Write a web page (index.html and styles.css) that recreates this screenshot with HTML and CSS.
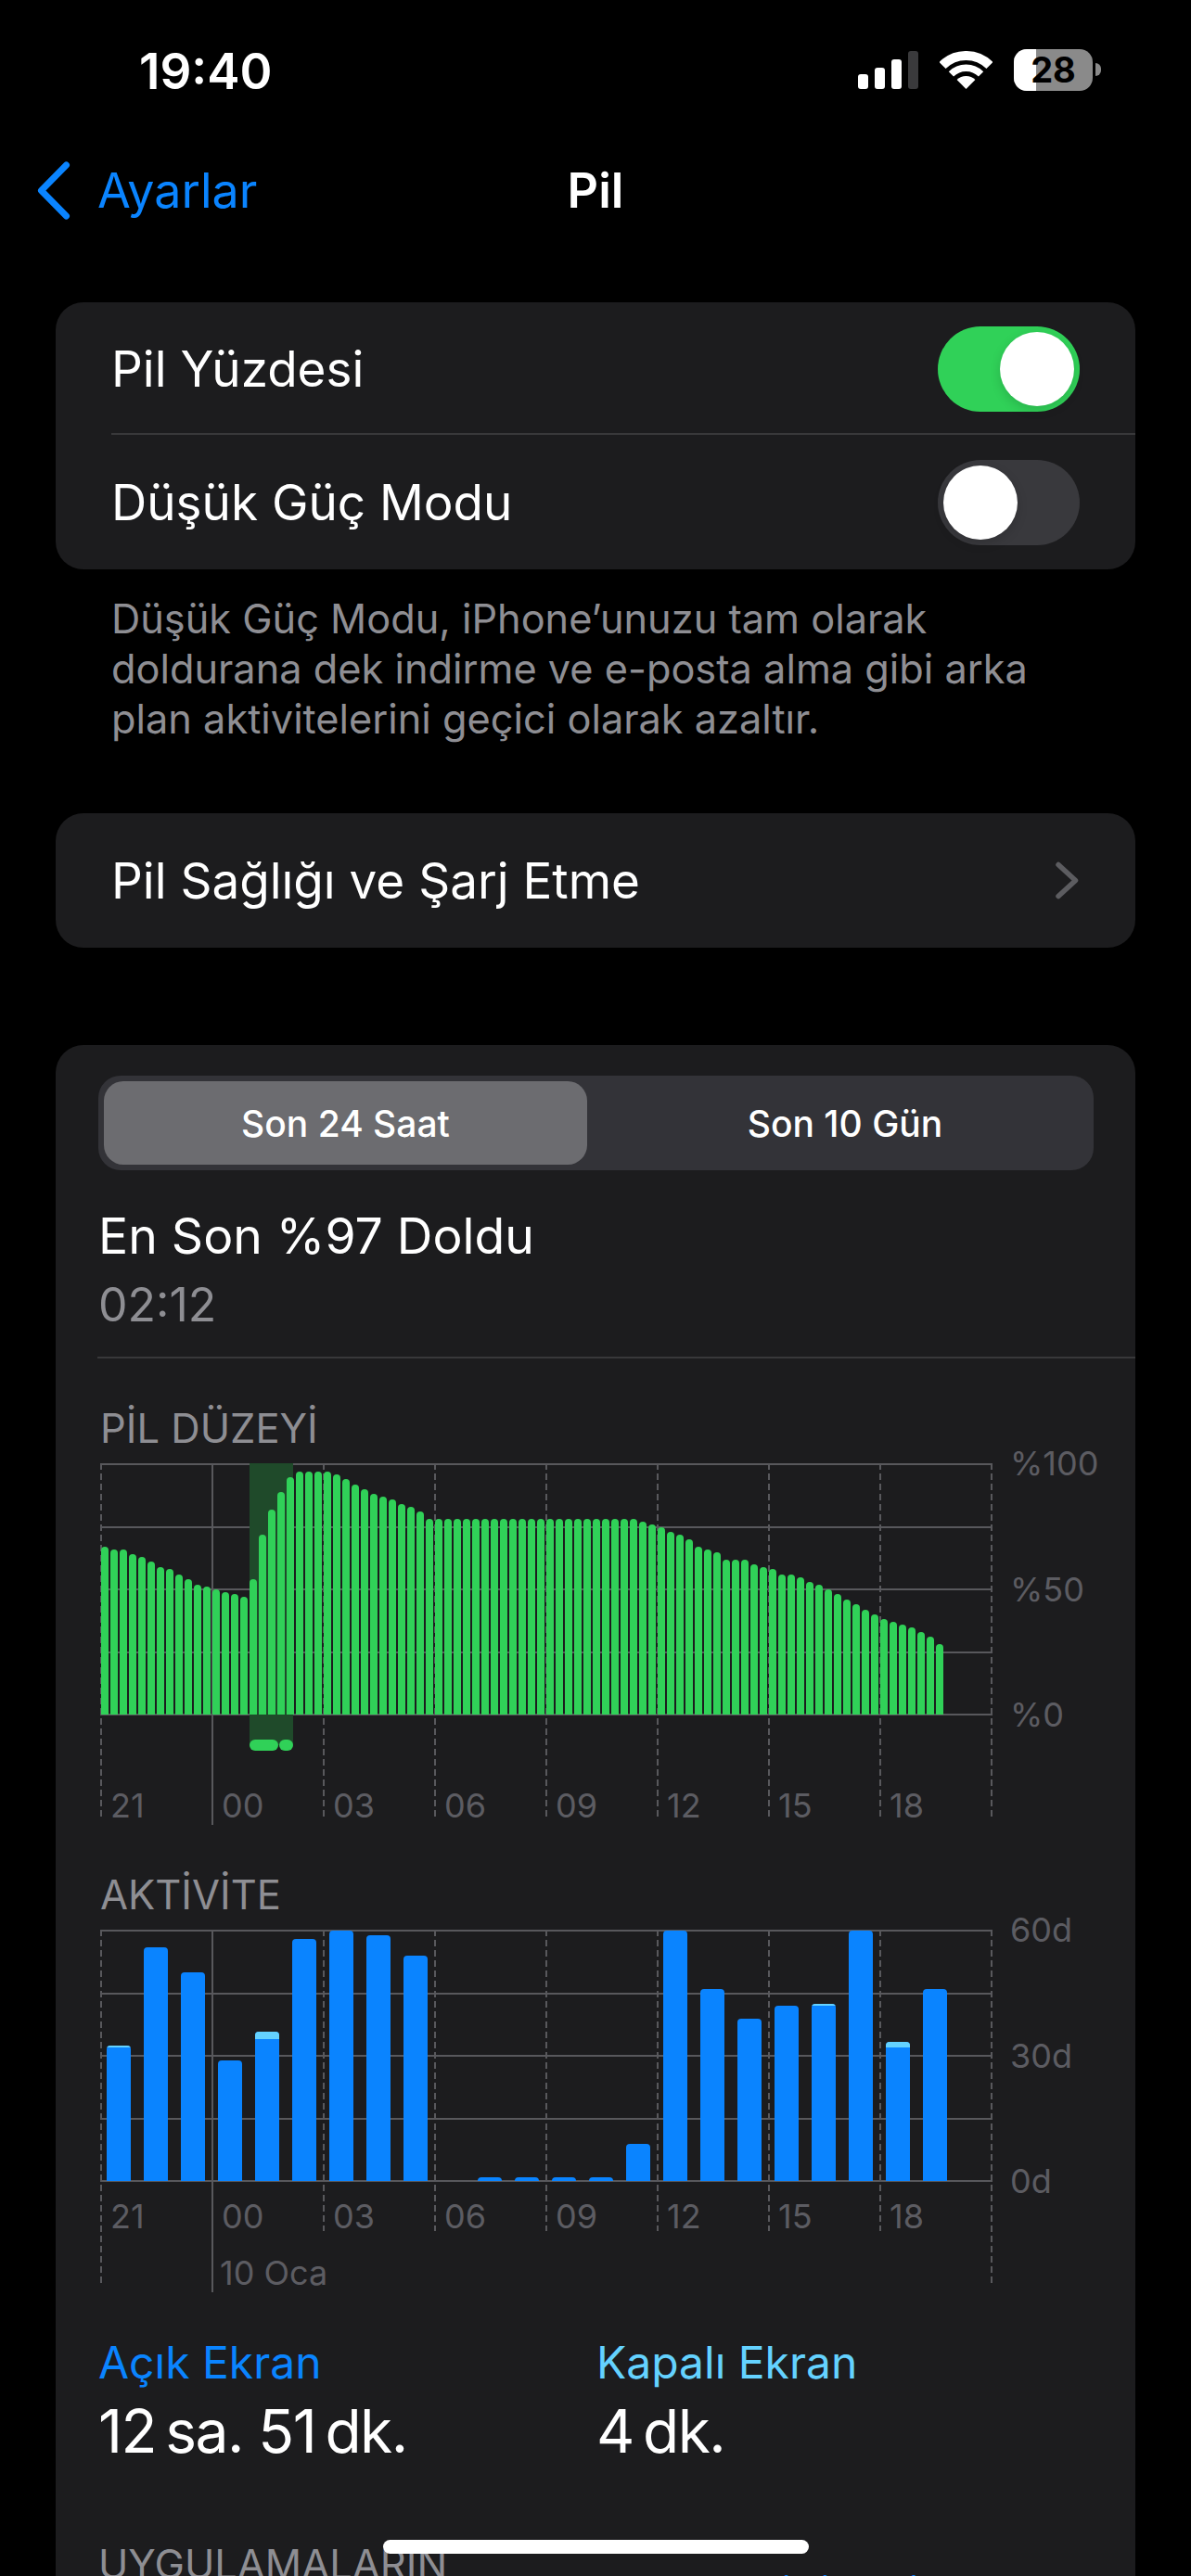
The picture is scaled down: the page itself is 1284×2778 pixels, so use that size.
FILE: index.html
```html
<!DOCTYPE html>
<html lang="tr">
<head>
    <meta charset="utf-8">
    <title>Pil</title>
    <link rel="stylesheet" href="styles.css">
</head>
<body>
    <div class="status-bar">
        <span class="clock">19:40</span>
        <div class="status-icons">
            <div class="signal">
                <span class="signal-bar s1"></span>
                <span class="signal-bar s2"></span>
                <span class="signal-bar s3"></span>
                <span class="signal-bar s4 off"></span>
            </div>
            <svg class="wifi" width="57" height="41" viewBox="0 0 57 41">
                <path d="M3.04 15.54A36 36 0 0 1 53.96 15.54" fill="none" stroke="#fff" stroke-width="10"/>
                <path d="M12.41 24.91A22.75 22.75 0 0 1 44.59 24.91" fill="none" stroke="#fff" stroke-width="7.5"/>
                <path d="M28.5 41L18.6 31.1A14 14 0 0 1 38.4 31.1Z" fill="#fff"/>
            </svg>
            <div class="battery">
                <div class="battery-body">
                    <span class="battery-fill"></span>
                    <span class="battery-num">28</span>
                </div>
                <span class="battery-nub"></span>
            </div>
        </div>
    </div>

    <div class="nav-bar">
        <div class="nav-back">
            <svg width="36" height="63" viewBox="0 0 36 63">
                <path d="M31.5 4L4.5 31.5L31.5 59" fill="none" stroke="#0a84ff" stroke-width="7" stroke-linecap="round" stroke-linejoin="round"/>
            </svg>
            <span>Ayarlar</span>
        </div>
        <span class="nav-title">Pil</span>
    </div>

    <div class="content">
        <div class="card">
            <div class="row row-first">
                <span>Pil Yüzdesi</span>
                <div class="toggle on"><span class="knob"></span></div>
            </div>
            <div class="row row-last">
                <span>Düşük Güç Modu</span>
                <div class="toggle"><span class="knob"></span></div>
            </div>
        </div>
        <p class="footnote">Düşük Güç Modu, iPhone’unuzu tam olarak doldurana dek indirme ve e-posta alma gibi arka plan aktivitelerini geçici olarak azaltır.</p>

        <div class="card card-link">
            <div class="row">
                <span>Pil Sağlığı ve Şarj Etme</span>
                <svg width="27" height="41" viewBox="0 0 27 41">
                    <path d="M4 3.5L22.5 20.5L4 37.5" fill="none" stroke="#5c5c60" stroke-width="5.5" stroke-linecap="round" stroke-linejoin="round"/>
                </svg>
            </div>
        </div>

        <div class="card card-usage">
            <div class="segmented">
                <div class="segment selected">Son 24 Saat</div>
                <div class="segment">Son 10 Gün</div>
            </div>

            <div class="charge-title">En Son %97 Doldu</div>
            <div class="charge-time">02:12</div>
            <div class="usage-divider"></div>

            <div class="section-title">PİL DÜZEYİ</div>
            <div class="chart-row">
                <div class="chart chart-level">
                    <div class="plot">
                        <div class="hlines"><i></i><i></i><i></i><i></i><i></i></div>
                        <div class="vlines">
                            <i class="vline"></i><i class="vline solid"></i><i class="vline"></i>
                            <i class="vline"></i><i class="vline"></i><i class="vline"></i>
                            <i class="vline"></i><i class="vline"></i><i class="vline"></i>
                        </div>
                        <div class="charging">
                            <span class="charge-pill wide"></span>
                            <span class="charge-pill"></span>
                        </div>
                        <div class="bars" id="levelBars"></div>
                    </div>
                    <div class="x-labels">
                        <span>21</span><span>00</span><span>03</span><span>06</span>
                        <span>09</span><span>12</span><span>15</span><span>18</span>
                    </div>
                </div>
                <div class="y-labels">
                    <span>%100</span>
                    <span>%50</span>
                    <span>%0</span>
                </div>
            </div>

            <div class="section-title section-activity">AKTİVİTE</div>
            <div class="chart-row">
                <div class="chart chart-activity">
                    <div class="plot">
                        <div class="hlines"><i></i><i></i><i></i><i></i><i></i></div>
                        <div class="vlines">
                            <i class="vline tall"></i><i class="vline solid"></i><i class="vline"></i>
                            <i class="vline"></i><i class="vline"></i><i class="vline"></i>
                            <i class="vline"></i><i class="vline"></i><i class="vline tall"></i>
                        </div>
                        <div class="bars" id="activityBars"></div>
                    </div>
                    <div class="x-labels">
                        <span>21</span><span>00</span><span>03</span><span>06</span>
                        <span>09</span><span>12</span><span>15</span><span>18</span>
                    </div>
                    <div class="date-label">10 Oca</div>
                </div>
                <div class="y-labels">
                    <span>60d</span>
                    <span>30d</span>
                    <span>0d</span>
                </div>
            </div>

            <div class="totals">
                <div class="total">
                    <div class="total-name screen-on">Açık Ekran</div>
                    <div class="total-value">12&#8201;sa. 51&#8201;dk.</div>
                </div>
                <div class="total">
                    <div class="total-name screen-off">Kapalı Ekran</div>
                    <div class="total-value">4&#8201;dk.</div>
                </div>
            </div>

            <div class="apps-head">
                <div class="apps-title">UYGULAMALARIN<br>PİL KULLANIMI</div>
                <div class="apps-link">AKTİVİTEYİ GÖSTER</div>
            </div>
        </div>
    </div>

    <div class="home-indicator"></div>

    <script src="charts.js"></script>
</body>
</html>
```

FILE: styles.css
```css
* {
    box-sizing: border-box;
}

html, body {
    height: 2778px;
    overflow: hidden;
}

body {
    margin: 0;
    background: #000;
    color: #fff;
    font-family: Inter, "Noto Sans", sans-serif;
    font-size: 53px;
    position: relative;
}

/* status bar */
.status-bar {
    height: 154px;
    display: flex;
    justify-content: space-between;
    align-items: center;
    padding: 0 97px 0 150px;
}

.clock {
    font-weight: 600;
    font-size: 53px;
}

.status-icons {
    display: flex;
    align-items: center;
    margin-top: -4px;
}

.signal {
    display: flex;
    align-items: flex-end;
    gap: 7px;
    height: 41px;
}

.signal-bar {
    width: 11px;
    background: #fff;
    border-radius: 3px;
}

.s1 { height: 16px; }
.s2 { height: 23px; }
.s3 { height: 32px; }
.s4 { height: 41px; }

.signal-bar.off {
    background: #3a3a3c;
}

.wifi {
    margin-left: 23px;
}

.battery {
    display: flex;
    align-items: center;
    margin-left: 23px;
}

.battery-body {
    position: relative;
    width: 85px;
    height: 45px;
    border-radius: 14px;
    overflow: hidden;
    background: #8a8a8a;
    display: flex;
    align-items: center;
    justify-content: center;
}

.battery-fill {
    position: absolute;
    left: 0;
    top: 0;
    bottom: 0;
    width: 24px;
    background: #fff;
}

.battery-num {
    position: relative;
    color: #000;
    font-size: 38px;
    font-weight: 700;
}

.battery-nub {
    width: 6px;
    height: 14px;
    margin-left: 3px;
    background: #8a8a8a;
    border-radius: 0 7px 7px 0;
}

/* navigation */
.nav-bar {
    height: 103px;
    position: relative;
    display: flex;
    align-items: center;
    justify-content: center;
    margin-bottom: 69px;
    font-size: 52px;
}

.nav-back {
    position: absolute;
    left: 40px;
    top: 20px;
    display: flex;
    align-items: center;
    gap: 29px;
    color: #0a84ff;
}

.nav-title {
    font-weight: 600;
}

.content {
    height: 2452px;
    overflow: hidden;
    padding: 0 60px;
}

/* cards */
.card {
    background: #1c1c1e;
    border-radius: 30px;
}

.row {
    display: flex;
    justify-content: space-between;
    align-items: center;
    height: 145px;
    padding: 0 60px 0 60px;
}

.row-first {
    height: 143px;
    position: relative;
}

.row-first::after {
    content: "";
    position: absolute;
    left: 60px;
    right: 0;
    bottom: 0;
    height: 2px;
    background: #38383a;
}

.toggle {
    width: 153px;
    height: 92px;
    border-radius: 46px;
    background: #39393d;
    padding: 6px;
}

.toggle.on {
    background: #30d158;
    display: flex;
    justify-content: flex-end;
}

.knob {
    display: block;
    width: 80px;
    height: 80px;
    border-radius: 50%;
    background: #fff;
    box-shadow: 0 4px 12px rgba(0,0,0,0.15);
}

.footnote {
    margin: 26px 0 0;
    padding: 0 60px;
    font-size: 43.3px;
    line-height: 54px;
    color: #8e8e93;
}

.card-link {
    margin-top: 75px;
}

.card-usage {
    margin-top: 105px;
    padding: 33px 0 40px 46px;
}

/* segmented control */
.segmented {
    display: flex;
    width: 1073px;
    height: 102px;
    padding: 6px;
    border-radius: 24px;
    background: #333338;
    font-size: 39px;
    font-weight: 500;
}

.segment {
    flex: 1;
    display: flex;
    align-items: center;
    justify-content: center;
    padding-left: 16px;
}

.segment.selected {
    flex: none;
    width: 521px;
    padding-left: 0;
    background: #6c6c70;
    border-radius: 21px;
}

.charge-title {
    margin-top: 41px;
    font-size: 53.5px;
    line-height: 60px;
}

.charge-time {
    margin-top: 14px;
    font-size: 50px;
    line-height: 60px;
    color: #8e8e93;
}

.usage-divider {
    height: 2px;
    margin: 26px 0 0 -1px;
    background: #38383a;
}

.section-title {
    margin: 48px 0 0 2px;
    font-size: 43.5px;
    line-height: 54px;
    color: #8e8e93;
}

.section-activity {
    margin-top: 49px;
}

/* charts */
.chart-row {
    display: flex;
    margin: 11px 0 0 2px;
}

.chart {
    width: 962px;
}

.plot {
    position: relative;
    height: 272px;
}

.hlines {
    position: absolute;
    inset: 0;
    display: flex;
    flex-direction: column;
    justify-content: space-between;
}

.hlines i {
    display: block;
    height: 2px;
    background: #58585c;
}

.vlines {
    position: absolute;
    left: 0;
    right: 0;
    top: 0;
    display: flex;
    justify-content: space-between;
    align-items: flex-start;
}

.vline {
    display: block;
    width: 2px;
    background: repeating-linear-gradient(#58585c 0 7px, transparent 7px 11px);
}

.vline.solid {
    background: #58585c;
}

.chart-level .vline { height: 385px; }
.chart-level .vline.solid { height: 390px; }
.chart-activity .vline { height: 325px; }
.chart-activity .vline.tall { height: 385px; }
.chart-activity .vline.solid { height: 391px; }

.bars {
    position: absolute;
    left: 0;
    right: 0;
    bottom: 1px;
    display: flex;
    align-items: flex-end;
}

.chart-level .bars {
    padding-left: 1px;
    gap: 2.5px;
}

.chart-activity .bars {
    padding-left: 7px;
    gap: 14px;
}

.bar {
    flex: none;
    overflow: hidden;
    display: flex;
    flex-direction: column;
}

.chart-level .bar {
    width: 7.5px;
    border-radius: 4px 4px 0 0;
    background: #30d158;
}

.chart-activity .bar {
    width: 26px;
    border-radius: 4px 4px 0 0;
    background: #0a84ff;
}

.bar-off {
    background: #64d2ff;
}

/* charging window under the level bars */
.charging {
    position: absolute;
    left: 161px;
    top: 0;
    width: 47px;
    height: 304px;
    background: #1f4a2a;
    display: flex;
    align-items: flex-end;
    gap: 1px;
}

.charge-pill {
    width: 15px;
    height: 12px;
    margin-bottom: -6px;
    border-radius: 6px;
    background: #30d158;
}

.charge-pill.wide {
    width: 31px;
}

.x-labels {
    display: flex;
    font-size: 36px;
    line-height: 40px;
    color: #5c5c62;
}

.x-labels span {
    width: 120px;
    padding-left: 11px;
}

.chart-level .x-labels { margin-top: 77px; }
.chart-activity .x-labels { margin-top: 17px; }

.date-label {
    margin: 21px 0 0 129px;
    font-size: 36px;
    line-height: 40px;
    color: #5c5c62;
}

.y-labels {
    margin: -20px 0 0 19px;
    height: 311px;
    display: flex;
    flex-direction: column;
    justify-content: space-between;
    font-size: 36px;
    line-height: 40px;
    color: #5c5c62;
}

/* totals */
.totals {
    display: flex;
    margin-top: 50px;
}

.total {
    width: 537px;
}

.total-name {
    font-size: 48px;
    line-height: 54px;
}

.screen-on { color: #0a84ff; }
.screen-off { color: #64d2ff; }

.total-value {
    margin-top: 7px;
    font-size: 64px;
    letter-spacing: -1.5px;
    line-height: 80px;
}

.apps-head {
    display: flex;
    justify-content: space-between;
    align-items: center;
    width: 1073px;
    margin-top: 76px;
    font-size: 43.5px;
    line-height: 54px;
}

.apps-title {
    color: #8e8e93;
}

.apps-link {
    margin-top: 20px;
    color: #0a84ff;
}

.home-indicator {
    position: absolute;
    left: 413px;
    top: 2739px;
    width: 459px;
    height: 15px;
    border-radius: 8px;
    background: #fff;
}
```

FILE: charts.js
```js
// battery level in percent, one bar per 15 minutes
const levels = [
    67, 66, 66, 64, 63, 61, 59, 58, 56, 54, 52, 51, 50, 49, 48, 47,
    54, 72, 82, 89, 95, 97, 97, 97, 97, 96, 94, 92, 90, 88, 87, 86, 84, 83, 81,
    78, 78, 78, 78, 78, 78, 78, 78, 78, 78, 78, 78, 78, 78, 78, 78, 78, 78, 78, 78, 78, 78, 78,
    77, 76, 75, 73, 72, 70, 67, 66, 65, 62, 62, 62, 60, 59, 58, 56, 56, 55,
    53, 52, 50, 48, 46, 44, 42, 40, 38, 37, 36, 35, 33, 31, 28
];

// minutes per hour with the screen on / off
const screenOn = [32, 56, 50, 29, 34, 58, 60, 59, 54, 0, 0.8, 0.8, 0.8, 0.8, 8.8, 60, 46, 39, 42, 42, 60, 32, 46];
const screenOff = [0.4, 0, 0, 0, 1.8, 0, 0, 0, 0, 0, 0, 0, 0, 0, 0, 0, 0, 0, 0, 0.4, 0, 1.3, 0];

const PLOT_HEIGHT = 270;

const levelBars = document.getElementById('levelBars');
levels.forEach((level) => {
    const bar = document.createElement('div');
    bar.className = 'bar';
    bar.style.height = (level / 100 * PLOT_HEIGHT) + 'px';
    levelBars.appendChild(bar);
});

const activityBars = document.getElementById('activityBars');
screenOn.forEach((minutes, i) => {
    const bar = document.createElement('div');
    bar.className = 'bar';
    bar.style.height = ((minutes + screenOff[i]) / 60 * PLOT_HEIGHT) + 'px';
    if (minutes === 0) {
        bar.style.visibility = 'hidden';
    }
    if (screenOff[i] > 0) {
        const off = document.createElement('div');
        off.className = 'bar-off';
        off.style.height = (screenOff[i] / 60 * PLOT_HEIGHT) + 'px';
        bar.appendChild(off);
    }
    activityBars.appendChild(bar);
});
```
